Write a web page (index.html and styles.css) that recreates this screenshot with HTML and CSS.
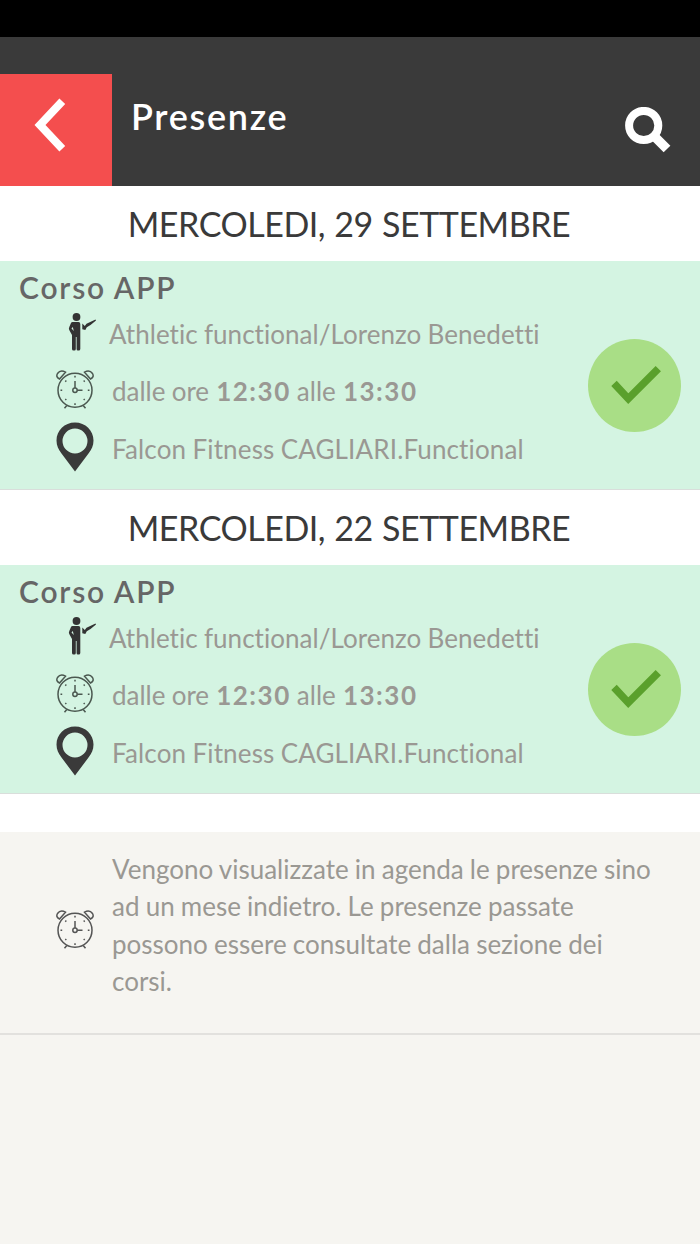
FILE: index.html
```html
<!DOCTYPE html>
<html lang="it">
<head>
  <meta charset="UTF-8">
  <meta name="viewport" content="width=device-width, initial-scale=1.0">
  <title>Presenze</title>
  <link rel="stylesheet" href="styles.css">
</head>
<body>
  <!-- Icons used more than once -->
  <svg class="sprite" width="0" height="0">
    <symbol id="trainer" viewBox="0 0 28 38">
      <circle cx="8.500" cy="4" r="3.900"/>
      <path fill-rule="evenodd" d="M4.500 9H10.500Q12.300 9 12.300 11V36q0 1.500-1.600 1.500h-.8q-1.300 0-1.300-1.500V24h-.8V36q0 1.500-1.400 1.500h-.8q-1.600 0-1.600-1.500V22L1.500 17.500Q.3 15.800 1.300 14L3 10Q3.500 9 4.500 9ZM4.800 14 3.500 15.500 5.800 18Z"/>
      <path d="M14.300 10.500 16.800 13 18.500 10.700 27.500 6.500 28 7.500 22.500 12 18.800 14.300 17.300 17 14.300 16.300Z"/>
    </symbol>
    <symbol id="clock" viewBox="0 0 38 40">
      <g fill="none" stroke="currentColor" stroke-width="1.500">
        <circle cx="19" cy="21.300" r="17"/>
        <circle cx="19" cy="21.300" r="2.200"/>
        <path d="M19 19.100V12M21.200 21.300H26.500"/>
        <path d="M3.500 10Q-.5 8 1.500 4.500 4.500.3 9.500 3.200ZM34.500 10Q38.500 8 36.500 4.500 33.500.3 28.500 3.200Z"/>
        <path d="M10.800 36.500 8.500 39.300M27.200 36.500 29.500 39.300"/>
        <path d="M19 6.800V8.500M19 34.200V35.900M4.500 21.300H6.200M31.800 21.300H33.500M9.300 11.600 10.300 12.600M28.700 11.600 27.700 12.600M9.300 31 10.300 30M28.700 31 27.700 30"/>
      </g>
    </symbol>
    <symbol id="pin" viewBox="0 0 38 50">
      <path fill-rule="evenodd" d="M19 .5C29.500.5 37.500 8.500 37.500 18.500 37.500 24 35.500 27.500 32.500 31.500L19 49.500 5.500 31.500C2.500 27.500.5 24 .5 18.500.5 8.500 8.500.5 19 .5ZM19 6.500A12.500 12.500 0 1 0 19 31.500 12.500 12.500 0 1 0 19 6.500Z"/>
    </symbol>
    <symbol id="check" viewBox="0 0 56 44">
      <path d="M7 19.400 21.300 34.700 51.300 4.700" fill="none" stroke="currentColor" stroke-width="7.500"/>
    </symbol>
  </svg>

  <div class="status-bar"></div>
  <header>
    <a class="back">
      <svg width="34" height="56" viewBox="0 0 34 56"><path d="M29.300 4.300 7 28 29.300 51.700" fill="none" stroke="#fff" stroke-width="8"/></svg>
    </a>
    <h1>Presenze</h1>
    <a class="search">
      <svg width="46" height="46" viewBox="0 0 46 46"><circle cx="18.700" cy="18.500" r="14.600" fill="none" stroke="#fff" stroke-width="8"/><path d="M29 29 42 42" stroke="#fff" stroke-width="9.500"/></svg>
    </a>
  </header>

  <main>
    <h2>MERCOLEDI, 29 SETTEMBRE</h2>
    <section class="lesson">
      <h3>Corso APP</h3>
      <div class="lesson-body">
        <ul>
          <li class="teacher"><svg class="icon-trainer"><use href="#trainer"/></svg><span>Athletic functional/Lorenzo Benedetti</span></li>
          <li class="time"><svg class="icon-clock"><use href="#clock"/></svg><span>dalle ore <b>12:30</b> alle <b>13:30</b></span></li>
          <li class="place"><svg class="icon-pin"><use href="#pin"/></svg><span>Falcon Fitness CAGLIARI.Functional</span></li>
        </ul>
        <div class="badge"><svg class="icon-check"><use href="#check"/></svg></div>
      </div>
    </section>

    <h2>MERCOLEDI, 22 SETTEMBRE</h2>
    <section class="lesson">
      <h3>Corso APP</h3>
      <div class="lesson-body">
        <ul>
          <li class="teacher"><svg class="icon-trainer"><use href="#trainer"/></svg><span>Athletic functional/Lorenzo Benedetti</span></li>
          <li class="time"><svg class="icon-clock"><use href="#clock"/></svg><span>dalle ore <b>12:30</b> alle <b>13:30</b></span></li>
          <li class="place"><svg class="icon-pin"><use href="#pin"/></svg><span>Falcon Fitness CAGLIARI.Functional</span></li>
        </ul>
        <div class="badge"><svg class="icon-check"><use href="#check"/></svg></div>
      </div>
    </section>
  </main>

  <!-- Note on the period shown -->
  <div class="note">
    <svg class="icon-clock"><use href="#clock"/></svg>
    <p>Vengono visualizzate in agenda le presenze sino ad un mese indietro. Le presenze passate possono essere consultate dalla sezione dei corsi.</p>
  </div>
</body>
</html>
```
FILE: styles.css
```css
/* Basic styling */
* {
  box-sizing: border-box;
}

body {
  margin: 0;
  min-height: 1244px;
  font-family: Lato, sans-serif;
  font-size: 26px;
  font-variant-ligatures: none;
  word-spacing: -0.5px;
  color: #9a9893;
  background-color: #f6f5f1;
}

h1, h2, h3, ul, p {
  margin: 0;
  padding: 0;
}

.sprite {
  display: block;
}

/* Header styling */
.status-bar {
  height: 37px;
  background-color: #000;
}

header {
  display: flex;
  height: 149px;
  padding-top: 37px;
  background-color: #3a3a3a;
  color: #fff;
}

.back {
  display: flex;
  align-items: center;
  justify-content: center;
  width: 112px;
  height: 112px;
  padding-right: 12px;
  padding-bottom: 10px;
  background-color: #f44e4e;
}

h1 {
  flex: 1;
  padding-left: 19px;
  font-size: 36px;
  line-height: 84px;
  font-weight: 600;
  letter-spacing: 1.7px;
}

.search {
  padding: 33px 29px 0 0;
}

/* Days and lessons */
main {
  padding-bottom: 38px;
  background-color: #fff;
}

h2 {
  height: 75px;
  padding-right: 2px;
  font-size: 34px;
  line-height: 76px;
  font-weight: 400;
  letter-spacing: -0.45px;
  word-spacing: 0.9px;
  text-align: center;
  color: #3a3a3a;
}

.lesson {
  height: 229px;
  background-color: #d4f4e2;
  border-bottom: 1px solid #d9dedb;
}

h3 {
  height: 45px;
  padding-left: 19px;
  font-size: 30px;
  line-height: 52px;
  font-weight: 600;
  letter-spacing: 1.8px;
  color: #666;
}

.lesson-body {
  display: flex;
  justify-content: space-between;
  padding: 0 19px 0 56px;
}

ul {
  list-style: none;
}

li {
  display: flex;
  height: 58px;
  line-height: 56px;
  white-space: nowrap;
}

li span {
  padding-left: 18px;
}

.teacher span {
  padding-left: 13px;
  letter-spacing: 0.04px;
}

.time {
  line-height: 55px;
}

.place {
  line-height: 55px;
  letter-spacing: 0.14px;
}

b {
  margin-left: 1px;
  letter-spacing: 1.5px;
}

.badge {
  display: flex;
  align-items: center;
  justify-content: center;
  width: 93px;
  height: 93px;
  margin-top: 33px;
  border-radius: 50%;
  background-color: #a9de86;
  color: #5aa02c;
}

/* Icons */
.icon-trainer {
  width: 28px;
  height: 38px;
  margin-top: 7px;
  margin-left: 12px;
  fill: #333;
}

.icon-clock {
  flex: none;
  width: 38px;
  height: 40px;
  margin-top: 5px;
  color: #4b5850;
}

.icon-pin {
  width: 38px;
  height: 50px;
  fill: #3a3a3a;
}

.icon-check {
  flex: none;
  width: 56px;
  height: 44px;
}

/* Note styling */
.note {
  display: flex;
  height: 203px;
  padding: 19px 35px 0 56px;
  border-bottom: 2px solid #e2e1de;
}

.note .icon-clock {
  margin-top: 58px;
  color: #555;
}

.note p {
  padding-left: 18px;
  line-height: 37.3px;
}
```
